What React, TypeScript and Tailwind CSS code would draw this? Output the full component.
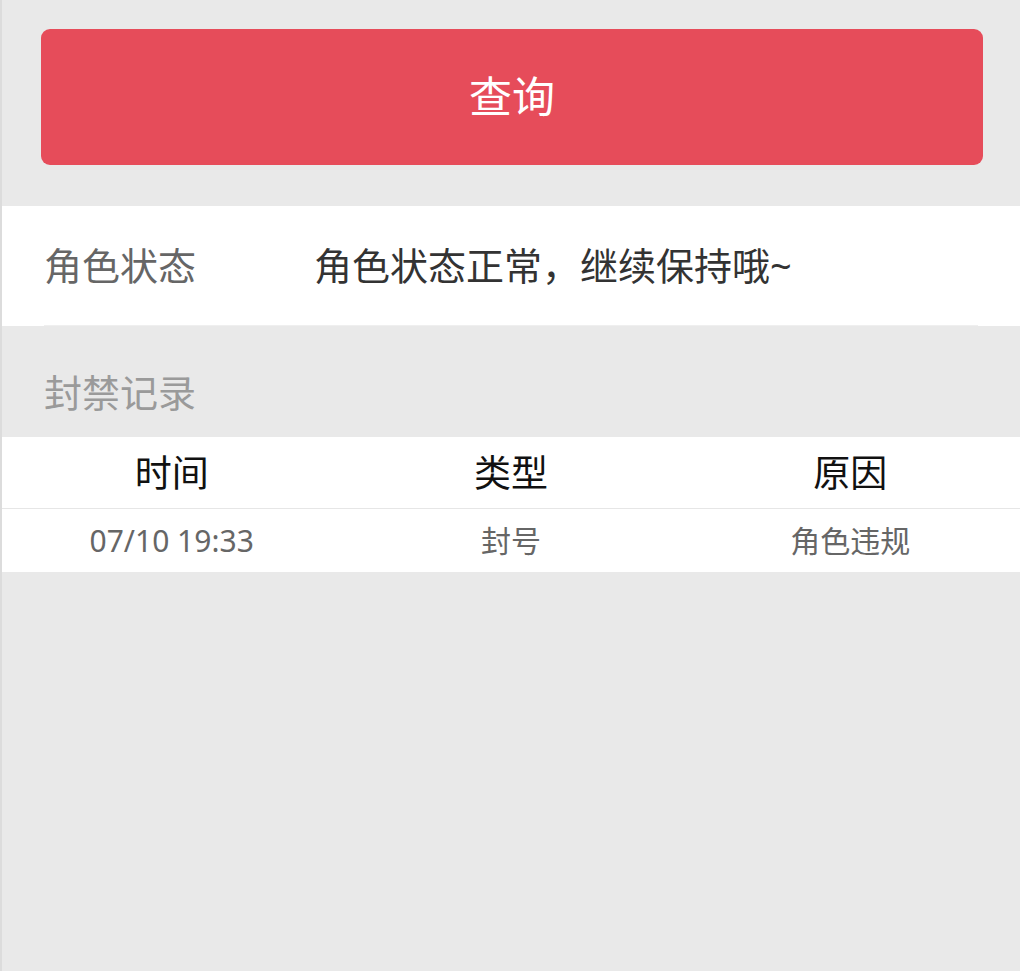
import React from "react";

const records = [{ time: "07/10 19:33", type: "封号", reason: "角色违规" }];

const App = () => {
  return (
    <div
      className="min-h-[971px] bg-[#e9e9e9] border-l-2 border-[#dcdcdc]"
      style={{ fontFamily: '"Noto Sans", "Noto Sans CJK SC", sans-serif' }}
    >
      <div className="pl-[39px] pr-[37px] pt-[29px] pb-[41px]">
        <button className="w-full h-[136px] rounded-[9px] bg-[#e64c5a] text-white text-[43px] flex items-center justify-center">
          查询
        </button>
      </div>

      <div className="bg-white px-[42px]">
        <div className="h-[120px] flex items-center border-b border-[#efefef]">
          <span className="w-[270px] text-[38px] text-[#666]">角色状态</span>
          <span className="text-[38px] text-[#333]">角色状态正常，继续保持哦~</span>
        </div>
      </div>

      <div className="h-[111px] flex items-center px-[42px] pt-[22px]">
        <span className="text-[38px] text-[#9a9a9a]">封禁记录</span>
      </div>

      <div className="bg-white">
        <div className="grid grid-cols-3 h-[72px] items-center border-b border-[#e6e6e6] text-[37px] text-[#111]">
          <span className="text-center">时间</span>
          <span className="text-center">类型</span>
          <span className="text-center">原因</span>
        </div>
        {records.map((r) => (
          <div
            key={r.time}
            className="grid grid-cols-3 h-[63px] items-center text-[30px] text-[#666]"
          >
            <span className="text-center">{r.time}</span>
            <span className="text-center">{r.type}</span>
            <span className="text-center">{r.reason}</span>
          </div>
        ))}
      </div>
    </div>
  );
};

export default App;
